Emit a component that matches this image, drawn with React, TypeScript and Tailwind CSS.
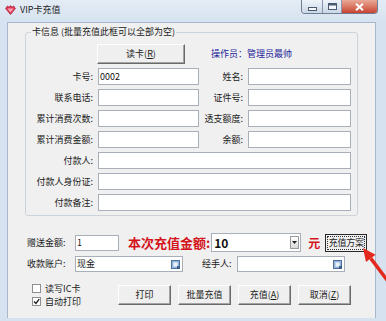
import React from "react";

function Label({ children }: { children: React.ReactNode }) {
  return (
    <div className="text-right whitespace-nowrap text-[9px] leading-[17px] text-[#1a1a1a]">
      {children}
    </div>
  );
}

function Field({ children, className = "" }: { children?: React.ReactNode; className?: string }) {
  return (
    <div
      className={`h-[17px] bg-white border border-[#a9afb8] flex items-center pl-[1px] text-[9px] leading-[15px] text-[#111] ${className}`}
    >
      {children}
    </div>
  );
}

function LookIcon() {
  return (
    <svg width="9" height="9" viewBox="0 0 9 9" className="mr-[2px]">
      <rect x="0.5" y="0.5" width="8" height="8" fill="#9fbde2" stroke="#4d6f9c" />
      <rect x="2" y="2" width="5" height="5" fill="#eaf2fb" stroke="#7f9ec6" strokeWidth="0.6" />
      <rect x="6" y="6" width="3" height="3" fill="#3c5f8c" />
    </svg>
  );
}

function Btn({ children, className = "" }: { children: React.ReactNode; className?: string }) {
  return (
    <div
      className={`flex items-center justify-center whitespace-nowrap text-[9px] text-[#1a1a1a] bg-[#efefef] border border-t-white border-l-white border-r-[#6a6a6a] border-b-[#6a6a6a] shadow-[inset_-1px_-1px_0_#a3a3a3] ${className}`}
    >
      {children}
    </div>
  );
}

function Check({ checked, label }: { checked?: boolean; label: string }) {
  return (
    <div className="flex items-center h-[13px] gap-[4px]">
      <div className="w-[9px] h-[9px] bg-white border border-[#8e8f8f] flex items-center justify-center">
        {checked && (
          <svg width="7" height="7" viewBox="0 0 7 7">
            <path d="M1 3.5 L3 5.5 L6.2 1.2" fill="none" stroke="#222" strokeWidth="1.4" />
          </svg>
        )}
      </div>
      <span className="text-[9px] leading-[13px] text-[#1a1a1a]">{label}</span>
    </div>
  );
}

export default function App() {
  return (
    <div className="relative w-[386px] h-[321px] overflow-hidden bg-[#d6e2f0] flex flex-col font-['Noto_Sans_CJK_SC','Noto_Sans',sans-serif]">
      {/* Title bar */}
      <div className="h-[22px] flex items-start bg-linear-to-b from-[#e4ecf5] to-[#d6e2f0]">
        <div className="flex items-center h-[20px] pl-[5px] gap-[4px]">
          <svg width="11" height="10" viewBox="0 0 11 10">
            <path d="M5.5 9.5 L0.6 3.6 L2.4 1 L4 2.2 L5.5 0.6 L7 2.2 L8.6 1 L10.4 3.6 Z" fill="#e23a55" stroke="#a3162e" strokeWidth="0.7" />
            <path d="M2.4 3.6 L8.6 3.6 L5.5 7.6 Z" fill="#f7a3b3" />
          </svg>
          <span className="text-[9px] leading-[12px] text-[#1e1e1e]">VIP卡充值</span>
        </div>
        <div className="ml-auto mr-[8px] flex h-[14px] rounded-b-[4px] overflow-hidden border border-t-0 border-[#6e7e95]">
          <div className="w-[21px] bg-linear-to-b from-[#eef3f9] to-[#cbd7e6] border-r border-[#8697ad] flex items-center justify-center">
            <div className="w-[7px] h-[2px] mt-[4px] bg-[#f4f7fb] border border-[#4a5a70] box-content" />
          </div>
          <div className="w-[19px] bg-linear-to-b from-[#eef3f9] to-[#cbd7e6] border-r border-[#8697ad] flex items-center justify-center">
            <svg width="9" height="7" viewBox="0 0 9 7">
              <rect x="0.5" y="0.5" width="8" height="6" fill="#f4f7fb" stroke="#4a5a70" />
              <rect x="1" y="1" width="7" height="1.5" fill="#4a5a70" />
            </svg>
          </div>
          <div className="w-[35px] bg-linear-to-b from-[#eaa897] to-[#c5412f] flex items-center justify-center">
            <svg width="9" height="8" viewBox="0 0 9 8">
              <path d="M1 0.8 L8 7.2 M8 0.8 L1 7.2" stroke="#ffffff" strokeWidth="2" />
            </svg>
          </div>
        </div>
      </div>

      {/* Body */}
      <div className="flex-1 flex">
        <div className="w-[7px]" />
        <div className="flex-1 bg-[#f0f0f0] border border-[#a8b8cc] border-b-0 flex flex-col pt-[3px] text-[#1a1a1a]">
          <fieldset className="mx-[17px] border border-[#cbd3db] rounded-[3px] pt-[6px] pb-[4px] px-0">
            <legend className="ml-[5px] px-[1px] text-[9px] leading-[12px] text-[#1a1a1a]">
              卡信息 (批量充值此框可以全部为空)
            </legend>
            <div className="flex items-center h-[20px]">
              <Btn className="ml-[71px] w-[88px] h-[20px]">
                读卡(<span className="underline">R</span>)
              </Btn>
              <span className="ml-[26px] text-[9px] text-[#1c1c9a]">操作员：管理员最帅</span>
            </div>
            <div className="mt-[4px] grid grid-cols-[67px_101px_39px_103px] gap-x-[5px] gap-y-[4px]">
              <Label>卡号:</Label>
              <Field>0002</Field>
              <Label>姓名:</Label>
              <Field />

              <Label>联系电话:</Label>
              <Field />
              <Label>证件号:</Label>
              <Field />

              <Label>累计消费次数:</Label>
              <Field />
              <Label>透支额度:</Label>
              <Field />

              <Label>累计消费金额:</Label>
              <Field />
              <Label>余额:</Label>
              <Field />

              <Label>付款人:</Label>
              <Field className="col-span-3" />

              <Label>付款人身份证:</Label>
              <Field className="col-span-3" />

              <Label>付款备注:</Label>
              <Field className="col-span-3" />
            </div>
          </fieldset>

          {/* Row 1 */}
          <div className="mt-[17px] h-[19px] flex items-center">
            <span className="ml-[19px] w-[48px] text-[9px] whitespace-nowrap">赠送金额:</span>
            <div className="w-[44px] h-[16px] bg-white border border-[#a9afb8] text-[9px] leading-[14px] pl-[1px]">1</div>
            <span className="ml-[9px] text-[13px] font-bold text-[#d4141c] leading-[19px] whitespace-nowrap">本次充值金额:</span>
            <div className="ml-[1px] w-[90px] h-[19px] bg-white border border-[#a9afb8] flex">
              <span className="flex-1 pl-[2px] text-[12px] font-bold leading-[17px] text-[#111]">10</span>
              <div className="w-[9px] my-[2px] mr-[1px] border border-[#9a9a9a] bg-linear-to-b from-white to-[#d8d8d8] flex items-center justify-center">
                <svg width="5" height="3" viewBox="0 0 5 3">
                  <path d="M0 0 L5 0 L2.5 3 Z" fill="#222" />
                </svg>
              </div>
            </div>
            <span className="ml-[7px] text-[12px] font-bold text-[#d4141c]">元</span>
            <div className="ml-[5px] w-[42px] h-[18px] border border-[#2a2a2a] bg-[#efefef] p-[1px]">
              <div className="w-full h-full border border-dotted border-[#333] flex items-center justify-center whitespace-nowrap text-[9px] leading-[10px] tracking-[-0.3px]">
                充值方案
              </div>
            </div>
          </div>

          {/* Row 2 */}
          <div className="mt-[4px] h-[16px] flex items-center">
            <span className="ml-[19px] w-[48px] text-[9px] whitespace-nowrap">收款账户:</span>
            <div className="w-[108px] h-[16px] bg-white border border-[#a9afb8] flex items-center">
              <span className="flex-1 pl-[1px] text-[9px] leading-[14px]">现金</span>
              <LookIcon />
            </div>
            <span className="ml-[19px] w-[35px] text-[9px] whitespace-nowrap">经手人:</span>
            <div className="w-[108px] h-[16px] bg-white border border-[#a9afb8] flex items-center">
              <span className="flex-1" />
              <LookIcon />
            </div>
          </div>

          {/* Bottom */}
          <div className="mt-[10px] h-[26px] flex items-center">
            <div className="ml-[24px] w-[86px] flex flex-col">
              <Check label="读写IC卡" />
              <Check checked label="自动打印" />
            </div>
            <div className="flex gap-[7px]">
              <Btn className="w-[53px] h-[20px]">打印</Btn>
              <Btn className="w-[53px] h-[20px]">批量充值</Btn>
              <Btn className="w-[53px] h-[20px]">
                充值(<span className="underline">A</span>)
              </Btn>
              <Btn className="w-[53px] h-[20px]">
                取消(<span className="underline">Z</span>)
              </Btn>
            </div>
          </div>
        </div>
        <div className="w-[10px]" />
      </div>
      <div className="h-[3px] bg-[#d6e2f0]" />

      {/* Red arrow annotation */}
      <svg className="absolute left-[350px] top-[240px]" width="36" height="50" viewBox="0 0 36 50">
        <path d="M20.8 18.4 L38.8 42.4" stroke="#e3291d" strokeWidth="3.5" />
        <path d="M13 8 L25.6 14.8 L16 22 Z" fill="#e3291d" />
      </svg>
    </div>
  );
}
